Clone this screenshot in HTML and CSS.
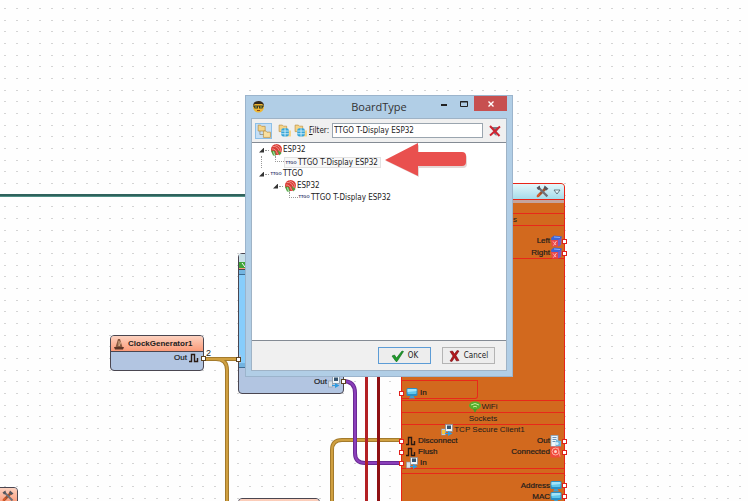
FILE: index.html
```
<!DOCTYPE html>
<html lang="en">
<head>
    <meta charset="utf-8">
    <title>BoardType</title>
    <link rel="stylesheet" href="styles.css">
</head>
<body>
    <!-- shared icons -->
    <svg class="defs" width="0" height="0" aria-hidden="true">
        <symbol id="pulse" viewBox="0 0 10 10">
            <path d="M0 8.5H2.5V1.5H5.5V8.5H8.5V5" fill="none" stroke="#2a1a12" stroke-width="1.4"/>
        </symbol>
        <symbol id="monitor" viewBox="0 0 12 12">
            <rect x="0.5" y="1" width="11" height="8" rx="1.5" fill="#2b8fc4"/>
            <rect x="1.5" y="2" width="9" height="5" rx="1" fill="#5fc8ec"/>
            <path d="M1.5 2h9v2l-9 1z" fill="#a4e4f8"/>
            <path d="M4.5 9h3l1.5 2.5h-6z" fill="#3f9fce"/>
        </symbol>
        <symbol id="pc" viewBox="0 0 12 12">
            <rect x="4.5" y="0.5" width="7" height="7" fill="#eef4f8" stroke="#7d8a96" stroke-width="0.7"/>
            <rect x="6" y="1.5" width="4" height="3.5" fill="#35546f"/>
            <rect x="0.5" y="5" width="4" height="6" fill="#d9e2e8" stroke="#8a959e" stroke-width="0.6"/>
            <path d="M4 9h3V7l4.5 2.5L7 12v-2H4z" fill="#2f9be0"/>
        </symbol>
        <symbol id="server" viewBox="0 0 12 12">
            <rect x="1" y="0.5" width="7" height="11" fill="#eef6fb" stroke="#7ba5c4" stroke-width="0.7"/>
            <path d="M2.5 2.5h4M2.5 4.5h4M2.5 6.5h3" stroke="#6c93b5"/>
            <path d="M6 5l5 1v5.5H5.5z" fill="#6fb7de"/>
            <circle cx="7" cy="8.5" r="1.6" fill="#d9effa"/>
        </symbol>
        <symbol id="signal" viewBox="0 0 12 12">
            <rect x="0.5" y="0.5" width="10" height="11" fill="#f1493c"/>
            <circle cx="5.5" cy="5.5" r="3.5" fill="none" stroke="#ffb3a6"/>
            <circle cx="5.5" cy="5.5" r="1.5" fill="#ffd5cc"/>
            <path d="M8 1.5l2 9" stroke="#ff9688"/>
        </symbol>
        <symbol id="button3d" viewBox="0 0 12 12">
            <path d="M1 3l3-2.5 8 1-1.5 3.5-9 .5z" fill="#3f63d6"/>
            <path d="M1 5h7v6.5H2z" fill="#e8484a"/>
            <path d="M8 5l3.5-2-.5 7-3 1.5z" fill="#7a5bc0"/>
            <path d="M3 6.5l3 3.5M6.5 6L3.5 10.5" stroke="#ffb5b0"/>
            <path d="M4 2l6 .5" stroke="#87b1ff"/>
        </symbol>
        <symbol id="tools" viewBox="0 0 12 12">
            <path d="M1.5 10.5L9 3" stroke="#a3512a" stroke-width="2.6"/>
            <path d="M2 2l8.5 8.5" stroke="#6e7078" stroke-width="2"/>
            <path d="M0.5 2.5l3-2 .5 3-2 1zM8 .5l3.5 3-2 1.5-2.5-2z" fill="#55565e"/>
            <path d="M1 11l2.5-3" stroke="#e05a2a" stroke-width="1.5"/>
        </symbol>
        <symbol id="esp" viewBox="0 0 12 12">
            <circle cx="6.5" cy="5.5" r="5.5" fill="#d93a36"/>
            <path d="M2.5 2.5q6-1 7.5 7M2 5q4-.5 5.5 5M5 .8q6 1.5 6 7" fill="none" stroke="#f6b1a4" stroke-width="0.7"/>
            <path d="M1 6.5l4 .5 1 4.5H3zM7.5 6l2 5.5 2-2.5z" fill="#49a43c"/>
            <path d="M3.5 7.5l1 3.5" stroke="#fff" stroke-width="0.7"/>
        </symbol>
        <symbol id="folder" viewBox="0 0 12 12">
            <path d="M1 1h2l1 1h3v4H1z" fill="#f5d488" stroke="#b98c3e" stroke-width="0.6"/>
            <path d="M5.5 6h2l1 1h3v4.5h-6z" fill="#f9e0a0" stroke="#b98c3e" stroke-width="0.6"/>
            <path d="M2.5 6v3h3" fill="none" stroke="#8e8468" stroke-width="0.6"/>
        </symbol>
        <symbol id="globe" viewBox="0 0 12 12">
            <path d="M1 1h3l1 1h3v5H1z" fill="#f5d488" stroke="#b98c3e" stroke-width="0.6"/>
            <path d="M8 6h4v5.5H8z" fill="#f5d488"/>
            <rect x="3" y="4" width="7" height="7.5" rx="2" fill="#36a5d8"/>
            <path d="M6.5 4v7.5M3 6.5h7M3 9h7" stroke="#d7f1fa" stroke-width="0.8"/>
        </symbol>
    </svg>

    <main class="canvas">
        <svg class="wires" width="100%" height="100%" aria-hidden="true">
            <defs>
                <pattern id="grid" width="35" height="35" patternUnits="userSpaceOnUse">
                    <path d="M4 8.5h2M16 8.5h2M27 8.5h2M4 20.5h2M16 20.5h2M27 20.5h2M4 31.5h2M16 31.5h2M27 31.5h2" stroke="#d4d4d4"/>
                </pattern>
            </defs>
            <rect width="100%" height="100%" fill="url(#grid)"/>
            <path d="M0 195.5H250" stroke="#2f625c" stroke-width="3"/>
            <path d="M0 196.5H250" stroke="#4f8f86"/>
            <g fill="none">
                <path class="gold-edge" d="M204 359H240M216 359Q227 359 227 370V501"/>
                <path class="gold" d="M204 359H240M216 359Q227 359 227 370V501"/>
                <path class="gold-edge" d="M402 440H342Q332 440 332 450V501"/>
                <path class="gold" d="M402 440H342Q332 440 332 450V501"/>
                <path d="M343 381Q355 381 355 393V453Q355 463 365 463H402" stroke="#6a2a94" stroke-width="4"/>
                <path d="M343 381Q355 381 355 393V453Q355 463 365 463H402" stroke="#8b3fba" stroke-width="2"/>
                <path d="M366.5 370V501" stroke="#b32024" stroke-width="3"/>
                <path d="M378.5 370V501" stroke="#8f1013" stroke-width="3"/>
            </g>
        </svg>

        <section class="node clock">
            <header class="node-head">
                <svg width="12" height="12" viewBox="0 0 12 12"><path d="M5 1h2l3 10H2z" fill="#8a5a41"/><path d="M1 9h10l-1 2.5H2z" fill="#5b3527"/><path d="M6 3v5l2-4" fill="none" stroke="#d9b08c"/></svg>
                <b>ClockGenerator1</b>
            </header>
            <div class="pin out">Out <svg width="10" height="10"><use href="#pulse"/></svg><i class="dot dark"></i></div>
        </section>
        <span class="count">2</span>

        <section class="node device">
            <header class="node-head"><svg width="12" height="16" viewBox="0 0 12 16"><rect width="12" height="8" fill="#c8dfe8"/><path d="M0 8h12v6H0z" fill="#3fa33a"/><path d="M3 9l3 4" stroke="#fff"/></svg></header>
            <div class="device-band"></div>
            <div class="device-screen"></div>
            <div class="pin device-in"><i class="dot dark"></i></div>
            <div class="device-band"></div>
            <div class="pin out">Out <svg width="12" height="12"><use href="#pc"/></svg><i class="dot dark"></i></div>
        </section>

        <section class="node esp">
            <header class="node-head"><svg width="13" height="13"><use href="#tools"/></svg><svg width="8" height="8" viewBox="0 0 8 8"><path d="M1 2h6L4 6z" fill="#e8fbff" stroke="#4b6068" stroke-width="0.8"/></svg></header>
            <div class="esp-band"></div>
            <div class="esp-row gap"></div>
            <div class="esp-row title cut">Buttons</div>
            <div class="esp-row buttons">
                <div class="pin out">Left<svg width="12" height="12"><use href="#button3d"/></svg><i class="dot"></i></div>
                <div class="pin out">Right<svg width="12" height="12"><use href="#button3d"/></svg><i class="dot"></i></div>
            </div>
            <div class="esp-row display">
                <div class="display-box">
                    <div class="pin in"><i class="dot"></i><svg width="12" height="12"><use href="#monitor"/></svg>In</div>
                </div>
            </div>
            <div class="esp-row title"><svg width="12" height="12" viewBox="0 0 12 12"><ellipse cx="6" cy="4.5" rx="6" ry="4" fill="#58ad2c"/><path d="M2 4q4-3 8 0M4 6q2-1.5 4 0" fill="none" stroke="#c5ef9b"/><path d="M4 8h4l-2 4z" fill="#4c9a25"/></svg>WiFi</div>
            <div class="esp-row title">Sockets</div>
            <div class="esp-row client">
                <div class="title"><svg width="12" height="12" viewBox="0 0 12 12"><use href="#pc"/><path d="M1 6h3v4H1z" fill="#f6c43c"/></svg>TCP Secure Client1</div>
                <div class="pair">
                    <div class="pin in"><i class="dot"></i><svg width="10" height="10"><use href="#pulse"/></svg>Disconnect</div>
                    <div class="pin out">Out<svg width="12" height="12"><use href="#server"/></svg><i class="dot"></i></div>
                </div>
                <div class="pair">
                    <div class="pin in"><i class="dot"></i><svg width="10" height="10"><use href="#pulse"/></svg>Flush</div>
                    <div class="pin out">Connected<svg width="12" height="12"><use href="#signal"/></svg><i class="dot"></i></div>
                </div>
                <div class="pin in"><i class="dot"></i><svg width="12" height="12"><use href="#pc"/></svg>In</div>
            </div>
            <div class="esp-row space"></div>
            <div class="esp-row net">
                <div class="pin out">Address<svg width="12" height="12"><use href="#monitor"/></svg><i class="dot"></i></div>
                <div class="pin out">MAC<svg width="12" height="12"><use href="#monitor"/></svg><i class="dot"></i></div>
            </div>
        </section>

        <section class="node corner"><header class="node-head"><svg width="14" height="12" viewBox="0 0 12 12"><use href="#tools"/></svg></header></section>
        <section class="node lower"><header class="node-head"></header></section>

        <div class="dialog" role="dialog" aria-labelledby="dialog-title">
            <div class="titlebar">
                <svg class="face" width="13" height="12" viewBox="0 0 13 12"><circle cx="6.5" cy="6" r="5.5" fill="#f0b732"/><path d="M1 4.500Q1.500 0 6.500 0T12 4.500L10 3H3z" fill="#33281c"/><path d="M1.500 4.500h4.500v3H2.500zM7 4.500h4.500l-1 3H7zM1 4.500h11v1H1z" fill="#3a3a26"/><path d="M3 6h2M8 6h2" stroke="#a6b43a"/><path d="M5 9.500h3" stroke="#8c4a15"/></svg>
                <h1 id="dialog-title">BoardType</h1>
                <div class="winbuttons">
                    <button aria-label="Minimize"><svg width="8" height="8"><path d="M1 5h6" stroke="#222" stroke-width="2"/></svg></button>
                    <button aria-label="Maximize"><svg width="8" height="8"><path d="M0.5 1.5h7v5h-7zM0 2h8" fill="none" stroke="#222"/></svg></button>
                    <button class="close" aria-label="Close"><svg width="6" height="6"><path d="M0.5 0.5l5 5M5.5 0.5l-5 5" stroke="#fff" stroke-width="1.4"/></svg></button>
                </div>
            </div>
            <div class="dialog-body">
                <div class="toolbar">
                    <button class="tool pressed" aria-label="Categories"><svg width="14" height="14"><use href="#folder"/></svg></button>
                    <button class="tool" aria-label="Expand"><svg width="13" height="13"><use href="#globe"/></svg></button>
                    <button class="tool" aria-label="Collapse"><svg width="13" height="13"><use href="#globe"/></svg></button>
                    <label for="filter"><u>F</u>ilter:</label>
                    <input id="filter" type="text" value="TTGO T-Display ESP32">
                    <button class="tool clear" aria-label="Clear filter"><svg width="12" height="12" viewBox="0 0 12 12"><path d="M1 2h10L7.5 7v4L5 9V7z" fill="#77808a"/><path d="M1 1l9.5 10M11 1.5L1 10.5" stroke="#cf2430" stroke-width="2"/></svg></button>
                </div>
                <ul class="tree">
                    <li class="level1"><span class="expander"></span><span class="twig"></span><svg width="12" height="12"><use href="#esp"/></svg>ESP32</li>
                    <li class="level2 first"><span class="branch"></span><span class="pick"><small>TTGO</small>TTGO T-Display ESP32</span></li>
                    <li class="level1"><span class="expander"></span><span class="twig"></span><small>TTGO</small>TTGO</li>
                    <li class="level2"><span class="expander"></span><span class="twig"></span><svg width="12" height="12"><use href="#esp"/></svg>ESP32</li>
                    <li class="level3"><span class="branch"></span><span><small>TTGO</small>TTGO T-Display ESP32</span></li>
                </ul>
                <div class="actions">
                    <button class="default"><svg width="13" height="12" viewBox="0 0 13 12"><path d="M1 6l2.5-1L5.5 8 11 1l1.5.5L6 11.5H5z" fill="#1f9a2c" stroke="#0c6a17" stroke-width="0.6"/></svg>OK</button>
                    <button><svg width="11" height="12" viewBox="0 0 11 12"><path d="M1 1.5l2.5-.5 2 3L8 .5l2 .5-3 4.5 3 5-2.5.5-2-3.5L3 11.5 1 11l3-5z" fill="#b3181d" stroke="#750c10" stroke-width="0.6"/></svg>Cancel</button>
                </div>
            </div>
            <svg class="arrow" width="82" height="36" viewBox="0 0 82 36" aria-hidden="true">
                <path d="M1 19L34 3V12H78Q82 12 82 16V22Q82 26 78 26H34V35Z" fill="#c9b0ae" opacity="0.5"/>
                <path d="M0 18L33 1V10H77Q81 10 81 14V20Q81 24 77 24H33V34Z" fill="#e9504e"/>
            </svg>
        </div>
    </main>
</body>
</html>
```
FILE: styles.css
```
* {
    box-sizing: border-box;
}
body {
    margin: 0;
    background-color: #fefefe;
    color: #1c1c1c;
    font-family: "Liberation Sans", sans-serif;
    font-size: 8px;
    line-height: 12px;
}
svg {
    display: block;
    flex: none;
}
.defs {
    position: absolute;
}
.canvas {
    position: relative;
    height: 100vh;
    overflow: hidden;
}
.wires {
    position: absolute;
    inset: 0;
}
.gold-edge {
    stroke: #a37a2c;
    stroke-width: 4;
}
.gold {
    stroke: #d0a040;
    stroke-width: 2;
}

/* nodes on the canvas */
.node {
    position: absolute;
    border: 1px solid #4a4650;
    border-radius: 4px;
    background-color: #b2c5e1;
}
.node-head {
    display: flex;
    align-items: center;
    height: 16px;
    border-bottom: 1px solid #4a4650;
    border-radius: 3px 3px 0 0;
    background: linear-gradient(#fcd2c0, #fb9a78);
}
.pin {
    display: flex;
    align-items: center;
    height: 12px;
    -webkit-text-stroke: 0.2px currentColor;
}
.out {
    justify-content: flex-end;
    margin-right: -3px;
}
.in {
    margin-left: -3px;
}
.dot {
    width: 5px;
    height: 5px;
    border: 1px solid #e0201c;
    background-color: #fff;
}
.dot.dark {
    border-color: #5c4322;
}
.clock {
    left: 110px;
    top: 335px;
    width: 94px;
    height: 36px;
}
.clock .node-head {
    gap: 3px;
    padding-left: 2px;
}
.clock .out {
    gap: 2px;
}
.count {
    position: absolute;
    left: 206px;
    top: 347px;
    font-size: 9px;
}
.device {
    left: 238px;
    top: 253px;
    width: 106px;
}
.device-band {
    height: 5px;
    border-bottom: 1px solid #3e6c92;
    background-color: #73b4e0;
}
.device-screen {
    height: 80px;
    background-color: #87cdfb;
}
.device-in {
    margin-left: -3px;
    height: 8px;
}
.device-in::after {
    content: "";
    flex: 1;
    height: 8px;
    background-color: #87cdfb;
}
.device .out {
    height: 25px;
    padding-top: 2px;
    gap: 1px;
}
.esp {
    left: 401px;
    top: 183px;
    width: 164px;
    border-color: #e82418;
    background-color: #d2691e;
}
.esp .node-head {
    justify-content: flex-end;
    gap: 4px;
    padding-right: 3px;
    border-bottom-color: #e82418;
    background: linear-gradient(#e4f7fb, #a5dcea);
}
.esp-band {
    height: 3px;
    background-color: #c5a49c;
}
.esp-row {
    border-bottom: 1px solid #e8281a;
}
.title {
    display: flex;
    align-items: center;
    justify-content: center;
    height: 12px;
    gap: 1px;
}
.gap {
    height: 11px;
}
.cut {
    justify-content: flex-end;
    padding-right: 47px;
}
.buttons {
    height: 33px;
    padding-top: 9px;
}
.display {
    height: 142px;
    padding-top: 121px;
}
.display-box {
    width: 76px;
    height: 19px;
    padding-top: 6px;
    border: solid #e8281a;
    border-width: 1px 1px 1px 0;
    border-radius: 0 0 3px 0;
}
.client {
    height: 44px;
}
.client .title {
    height: 10px;
}
.pair {
    display: flex;
    justify-content: space-between;
    height: 11px;
}
.space {
    height: 5px;
}
.net {
    height: 80px;
    padding-top: 6px;
}
.net .pin {
    height: 11px;
}
.esp .in svg {
    margin: 0 2px;
}
.corner {
    left: -60px;
    top: 487px;
    width: 78px;
    height: 60px;
}
.corner .node-head {
    justify-content: flex-end;
    padding-right: 2px;
}
.lower {
    left: 238px;
    top: 498px;
    width: 82px;
    height: 60px;
}

/* dialog */
.dialog {
    position: absolute;
    left: 245px;
    top: 95px;
    width: 268px;
    padding: 0 5px 5px;
    border: 1px solid #9bb4cc;
    background-color: #b1cee6;
    font-family: "DejaVu Sans Condensed", "DejaVu Sans", sans-serif;
    font-stretch: condensed;
}
.dialog button {
    display: flex;
    align-items: center;
    justify-content: center;
    padding: 0;
    border: 0;
    background: none;
    color: inherit;
    font: inherit;
}
.titlebar {
    display: grid;
    grid-template-columns: 1fr auto 1fr;
    height: 22px;
}
.face {
    margin: 5px 0 0 1px;
}
.titlebar h1 {
    margin: 0;
    font: 11px/22px "Open Sans", sans-serif;
    color: #333;
}
.winbuttons {
    display: flex;
    justify-content: flex-end;
}
.winbuttons button {
    width: 20px;
    height: 15px;
}
.winbuttons .close {
    width: 33px;
    background-color: #c75050;
}
.dialog-body {
    background-color: #f0f0f0;
    border: 1px solid #9fb3c6;
}
.toolbar {
    display: flex;
    align-items: center;
    height: 23px;
    padding: 0 3px;
}
.dialog .tool {
    width: 16px;
    height: 16px;
}
.dialog .pressed {
    width: 17px;
    margin-right: 4px;
    border: 1px solid #8cbfe8;
    background-color: #c5dff5;
}
.toolbar label {
    margin: 0 3px 0 1px;
}
.toolbar input {
    flex: 1;
    min-width: 0;
    height: 15px;
    padding: 0 1px;
    border: 1px solid #9aa5af;
    background-color: #fff;
    color: inherit;
    font: inherit;
}
.dialog .clear {
    margin-left: 4px;
}
.tree {
    height: 199px;
    margin: 0;
    padding: 1px 0 0 6px;
    border: 1px solid #848b94;
    border-width: 1px 0;
    background-color: #fff;
    list-style: none;
}
.tree li {
    display: flex;
    align-items: center;
    height: 12px;
}
.tree small {
    display: inline-block;
    width: 12px;
    margin-right: 1px;
    color: #32386e;
    font: bold 4px/10px "Liberation Sans", sans-serif;
    text-align: center;
    vertical-align: top;
}
.tree svg {
    margin-right: 1px;
}
.expander {
    width: 5px;
    height: 5px;
    margin-left: 1px;
    background-color: #333;
    clip-path: polygon(100% 0, 100% 100%, 0 100%);
}
.twig {
    width: 4px;
    height: 1px;
    margin: 0 1px;
    border-top: 1px dotted #999;
}
.level2 {
    padding-left: 14px;
}
.level3 {
    padding-left: 28px;
}
.branch {
    align-self: flex-start;
    width: 9px;
    height: 6px;
    margin-left: 3px;
    border: dotted #999;
    border-width: 0 0 1px 1px;
}
.first {
    position: relative;
}
.first::before {
    content: "";
    position: absolute;
    left: 3px;
    height: 12px;
    border-left: 1px dotted #999;
}
.pick {
    height: 11px;
    padding-right: 2px;
    border: 1px solid #e2e2e2;
    background-color: #f8f8f8;
    line-height: 10px;
}
.actions {
    display: flex;
    justify-content: flex-end;
    gap: 11px;
    padding: 6px 11px;
}
.dialog .actions button {
    width: 53px;
    height: 17px;
    gap: 4px;
    border: 1px solid #b4b4b4;
    background-color: #ededed;
}
.dialog .actions .default {
    border-color: #5c9cd6;
}
.arrow {
    position: absolute;
    left: 139px;
    top: 46px;
}
```
